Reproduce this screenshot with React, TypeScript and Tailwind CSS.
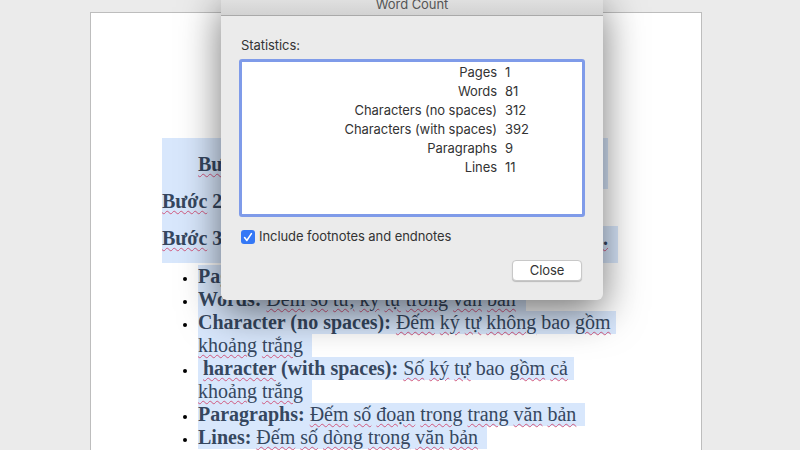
import React from 'react';

const ink = 'text-[#36475f]';
const wavy = 'underline decoration-wavy decoration-[#d0587e] decoration-1 underline-offset-2';

const stats = [
  ['Pages', '1'],
  ['Words', '81'],
  ['Characters (no spaces)', '312'],
  ['Characters (with spaces)', '392'],
  ['Paragraphs', '9'],
  ['Lines', '11'],
];

const Err: React.FC<{ children: React.ReactNode }> = ({ children }) => <span className={wavy}>{children}</span>;

const Line: React.FC<{ pr?: string; children: React.ReactNode }> = ({ pr = 'pr-0', children }) => (
  <span className={`block w-fit bg-[#d8e7fc] h-[23px] leading-[23px] whitespace-nowrap ${pr}`}>{children}</span>
);

const WordCountDialog = () => (
  <div className="absolute left-[221px] top-[-5px] w-[382px] h-[305px] flex flex-col bg-[#ebebeb] rounded-b-[6px] shadow-[0_12px_40px_rgba(0,0,0,0.55)] font-['Inter',sans-serif] text-[13px] tracking-[-0.07px] text-[#333] overflow-hidden">
    <div className="h-[21px] shrink-0 flex items-center justify-center bg-gradient-to-b from-[#e4e4e4] to-[#d2d2d2] border-b border-[#a9a9a9] text-[#555]">
      Word Count
    </div>
    <div className="flex flex-col px-[18px] pt-[20px]">
      <div className="pl-[2px] leading-[18px]">Statistics:</div>
      <div className="mt-[5px] h-[158px] border-[3px] border-[#7f9be9] rounded-[3px] bg-white pt-[1px]">
        <div className="grid grid-cols-[255px_auto] gap-x-[8px] auto-rows-[19px] leading-[19px]">
          {stats.map(([label, value]) => (
            <React.Fragment key={label}>
              <div className="text-right">{label}</div>
              <div>{value}</div>
            </React.Fragment>
          ))}
        </div>
      </div>
      <div className="mt-[12px] pl-[2px] flex items-center gap-[4px] h-[16px]">
        <span className="w-[14px] h-[14px] rounded-[3px] bg-[#3478f6] flex items-center justify-center">
          <svg viewBox="0 0 14 14" className="w-[14px] h-[14px]" fill="none" stroke="white" strokeWidth="1.6" strokeLinecap="round" strokeLinejoin="round">
            <path d="M3.6 7.6 L5.9 10.4 L10.4 3.6" />
          </svg>
        </span>
        <span>Include footnotes and endnotes</span>
      </div>
      <div className="mt-[15px] flex justify-end pr-[3px]">
        <button className="w-[70px] h-[21px] bg-white rounded-[4px] border border-[#c8c8c8] shadow-[0_1px_1px_rgba(0,0,0,0.2)] leading-[19px] text-[#333]">
          Close
        </button>
      </div>
    </div>
  </div>
);

export default function App() {
  return (
    <div className="relative w-[800px] h-[450px] overflow-hidden bg-[#ebebeb] pt-[12px] pl-[90px]">
      <div className={`w-[612px] h-[600px] bg-white border border-[#bdbdbd] pt-[125px] pl-[71px] font-['Liberation_Serif',serif] text-[20px] ${ink}`}>
        <div className="w-[446px] h-[51px] bg-[#d8e7fc] pl-[36px] pt-[15px] leading-[23px] font-bold whitespace-nowrap">
          <Err>Bước</Err> 1: Mở file Word
        </div>
        <div className="w-[400px] h-[37px] bg-[#d8e7fc] pt-[1px] leading-[23px] font-bold whitespace-nowrap">
          <Err>Bước</Err> 2: Chọn Review
        </div>
        <div className="w-[456px] h-[37px] bg-[#d8e7fc] pt-[1px] leading-[23px] font-bold whitespace-nowrap">
          <span className="flex justify-between pr-[10px]"><span><Err>Bước</Err> 3: Xem</span><Err>·.</Err></span>
        </div>
        <ul className="list-disc pl-[36px] marker:text-black marker:text-[14px] leading-[23px] mt-[2px]">
          <li><Line pr="pr-[100px]"><b>Pages:</b> Đếm số trang</Line></li>
          <li><Line pr="pr-[10px]"><b>Words:</b> <Err>Đếm</Err> <Err>số</Err> <Err>từ,</Err> <Err>ký</Err> <Err>tự</Err> <Err>trong</Err> <Err>văn</Err> <Err>bản</Err></Line></li>
          <li>
            <Line pr="pr-[5px]"><b>Character (no spaces):</b> <Err>Đếm</Err> <Err>ký</Err> <Err>tự</Err> <Err>không</Err> bao <Err>gồm</Err></Line>
            <Line pr="pr-[9px]"><Err>khoảng</Err> <Err>trắng</Err></Line>
          </li>
          <li>
            <Line pr="pr-[6px]"><b className="pl-[5px]"><Err>haracter</Err> (with spaces):</b> <Err>Số</Err> <Err>ký</Err> <Err>tự</Err> bao <Err>gồm</Err> <Err>cả</Err></Line>
            <Line pr="pr-[9px]"><Err>khoảng</Err> <Err>trắng</Err></Line>
          </li>
          <li><Line pr="pr-[9px]"><b>Paragraphs:</b> <Err>Đếm</Err> <Err>số</Err> <Err>đoạn</Err> <Err>trong</Err> <Err>trang</Err> <Err>văn</Err> <Err>bản</Err></Line></li>
          <li><Line pr="pr-[9px]"><b>Lines:</b> <Err>Đếm</Err> <Err>số</Err> <Err>dòng</Err> <Err>trong</Err> <Err>văn</Err> <Err>bản</Err></Line></li>
        </ul>
      </div>
      <WordCountDialog />
    </div>
  );
}
